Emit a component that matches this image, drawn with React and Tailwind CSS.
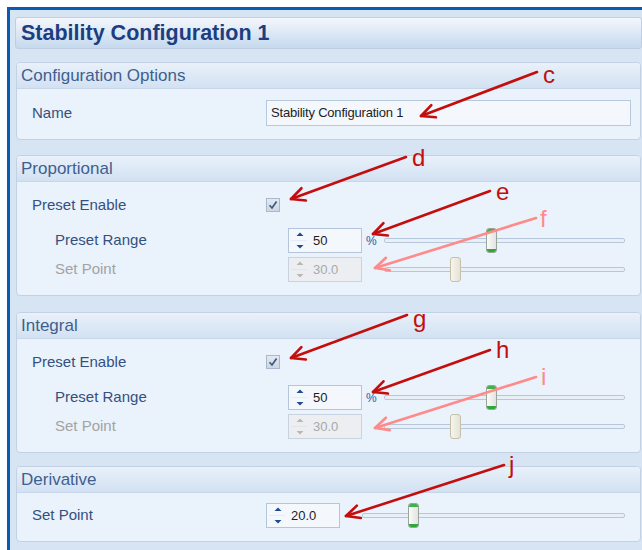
import React from 'react';

const FONT = { fontFamily: '"Liberation Sans", Arial, sans-serif' };

// Callout arrows laid over the form
const callouts = [
  { label: 'c', tx: 543, ty: 83, x1: 537, y1: 72, x2: 421, y2: 116, color: '#c40d0d' },
  { label: 'd', tx: 412, ty: 166, x1: 406, y1: 157, x2: 291, y2: 199, color: '#c40d0d' },
  { label: 'e', tx: 496, ty: 200, x1: 490, y1: 191, x2: 373, y2: 234, color: '#c40d0d' },
  { label: 'f', tx: 540, ty: 227, x1: 536, y1: 218, x2: 375, y2: 268, color: '#ff8a8a' },
  { label: 'g', tx: 413, ty: 327, x1: 407, y1: 315, x2: 291, y2: 358, color: '#c40d0d' },
  { label: 'h', tx: 496, ty: 358, x1: 490, y1: 350, x2: 373, y2: 392, color: '#c40d0d' },
  { label: 'i', tx: 541, ty: 385, x1: 536, y1: 377, x2: 375, y2: 428, color: '#ff8a8a' },
  { label: 'j', tx: 509, ty: 473, x1: 504, y1: 465, x2: 346, y2: 516, color: '#c40d0d' },
];

function Arrow({ x1, y1, x2, y2, color }) {
  const a = Math.atan2(y1 - y2, x1 - x2);
  const len = 15;
  const spread = 0.45;
  const w1 = [x2 + len * Math.cos(a - spread), y2 + len * Math.sin(a - spread)];
  const w2 = [x2 + len * Math.cos(a + spread), y2 + len * Math.sin(a + spread)];
  return (
    <g stroke={color} strokeWidth="2.6" strokeLinecap="round" fill="none">
      <line x1={x1} y1={y1} x2={x2} y2={y2} />
      <polyline points={`${w1[0]},${w1[1]} ${x2},${y2} ${w2[0]},${w2[1]}`} strokeLinejoin="round" />
    </g>
  );
}

function Section({ title, className = '', children }) {
  return (
    <div className={`ml-px mr-[1px] rounded-[4px] border border-[#c2d1e3] bg-[#eaf2fb] overflow-hidden ${className}`}>
      <div className="h-[26px] border-b border-[#c7d6e8] bg-gradient-to-b from-[#e9f1fa] to-[#d2e1f2] pl-[4px] flex items-center text-[17px] text-[#3f5f90]">
        {title}
      </div>
      {children}
    </div>
  );
}

function SpinBox({ value, disabled }) {
  const arrow = disabled ? '#b9b9b2' : '#1d4a91';
  return (
    <div
      className={`relative w-[74px] h-[25px] border flex items-center ${
        disabled ? 'border-[#c9d3df] bg-[#eceef1]' : 'border-[#b5c6dc] bg-[#f4f8fd]'
      }`}
    >
      <svg width="22" height="23" viewBox="0 0 22 23" className="shrink-0">
        <polygon points="7.5,7 11,3.5 14.5,7" fill={arrow} />
        <line x1="2" y1="11.5" x2="18" y2="11.5" stroke={disabled ? '#e2e4e6' : '#e4ebf4'} />
        <polygon points="7.5,16 11,19.5 14.5,16" fill={arrow} />
      </svg>
      <span className={`ml-[2px] text-[13px] ${disabled ? 'text-[#a9a9a9]' : 'text-[#1d1d1d]'}`}>{value}</span>
    </div>
  );
}

function Slider({ width, thumb, disabled }) {
  return (
    <div className="relative h-[25px] flex items-center" style={{ width }}>
      <div className="w-full h-[5px] rounded-[2px] border border-[#b6c7db] bg-[#e9eff7]" />
      <div
        className={`absolute top-0 w-[11px] h-[25px] rounded-[3px] border overflow-hidden flex flex-col justify-between ${
          disabled ? 'border-[#c4c0aa] bg-gradient-to-r from-[#f6f5ee] to-[#e6e3d4]' : 'border-[#9aa59a] bg-gradient-to-r from-[#fbfbfb] to-[#e2e4e0]'
        }`}
        style={{ left: thumb }}
      >
        {!disabled && <div className="h-[3px] bg-[#3fb34a]" />}
        {!disabled && <div className="h-[3px] bg-[#2fa83a]" />}
      </div>
    </div>
  );
}

function Checkbox() {
  return (
    <div className="w-[14px] h-[14px] border border-[#a9b8cc] bg-gradient-to-b from-[#e4e9f0] to-[#cdd6e2] flex items-center justify-center">
      <svg width="10" height="10" viewBox="0 0 10 10">
        <path d="M1.5 5.2 L4 8 L8.6 1.4" stroke="#3b5a88" strokeWidth="1.7" fill="none" />
      </svg>
    </div>
  );
}

function PresetGroup({ range, setPoint, rangeThumb, pointThumb }) {
  return (
    <div className="pl-[15px] pt-[13px] pb-[13px]">
      <div className="h-[20px] flex items-center">
        <div className="w-[234px] text-[15px] text-[#34507f]">Preset Enable</div>
        <Checkbox />
      </div>
      <div className="pl-[23px] mt-[13px] flex items-center">
        <div className="w-[233px] text-[15px] text-[#34507f]">Preset Range</div>
        <SpinBox value={range} />
        <div className="w-[22px] pl-[4px] text-[12px] text-[#2b5aa3]">%</div>
        <Slider width={241} thumb={rangeThumb} />
      </div>
      <div className="pl-[23px] mt-[4px] flex items-center">
        <div className="w-[233px] text-[15px] text-[#a3a3a3]">Set Point</div>
        <SpinBox value={setPoint} disabled />
        <div className="w-[22px]" />
        <Slider width={241} thumb={pointThumb} disabled />
      </div>
    </div>
  );
}

export default function App() {
  return (
    <div className="relative w-[642px] h-[550px] overflow-hidden bg-white" style={FONT}>
      <div className="ml-[7px] mt-[7px] h-[543px] border-t-[3px] border-l-[3px] border-[#0b5bb3] bg-[#d6e4f3] pl-[5px] pt-[7px]">
        <div className="h-[32px] rounded-[3px] border border-[#bfcfe1] bg-gradient-to-b from-[#f4f7fc] to-[#c5d9ee] flex items-center pl-[5px]">
          <span className="text-[21.5px] font-bold text-[#1c3e80]">Stability Configuration 1</span>
        </div>

        <Section title="Configuration Options" className="mt-[13px]">
          <div className="pl-[15px] pt-[11px] pb-[13px] flex items-center">
            <div className="w-[234px] text-[15px] text-[#34507f]">Name</div>
            <div className="w-[365px] h-[26px] border border-[#b9c9dd] bg-[#f4f8fd] flex items-center pl-[4px] text-[13px] text-[#1d1d1d] tracking-[-0.2px]">
              Stability Configuration 1
            </div>
          </div>
        </Section>

        <Section title="Proportional" className="mt-[15px]">
          <PresetGroup range="50" setPoint="30.0" rangeThumb={102} pointThumb={66} />
        </Section>

        <Section title="Integral" className="mt-[16px]">
          <PresetGroup range="50" setPoint="30.0" rangeThumb={102} pointThumb={66} />
        </Section>

        <Section title="Derivative" className="mt-[13px]">
          <div className="pl-[15px] pt-[10px] pb-[13px] flex items-center">
            <div className="w-[234px] text-[15px] text-[#34507f]">Set Point</div>
            <SpinBox value="20.0" />
            <div className="w-[22px]" />
            <Slider width={263} thumb={46} />
          </div>
        </Section>
      </div>

      <svg className="absolute inset-0 pointer-events-none" width="642" height="550" viewBox="0 0 642 550">
        {callouts.map((c) => (
          <g key={c.label}>
            <Arrow {...c} />
            <text x={c.tx} y={c.ty} fill={c.color} fontSize="24" fontFamily='"Liberation Sans", Arial, sans-serif'>
              {c.label}
            </text>
          </g>
        ))}
      </svg>
    </div>
  );
}
